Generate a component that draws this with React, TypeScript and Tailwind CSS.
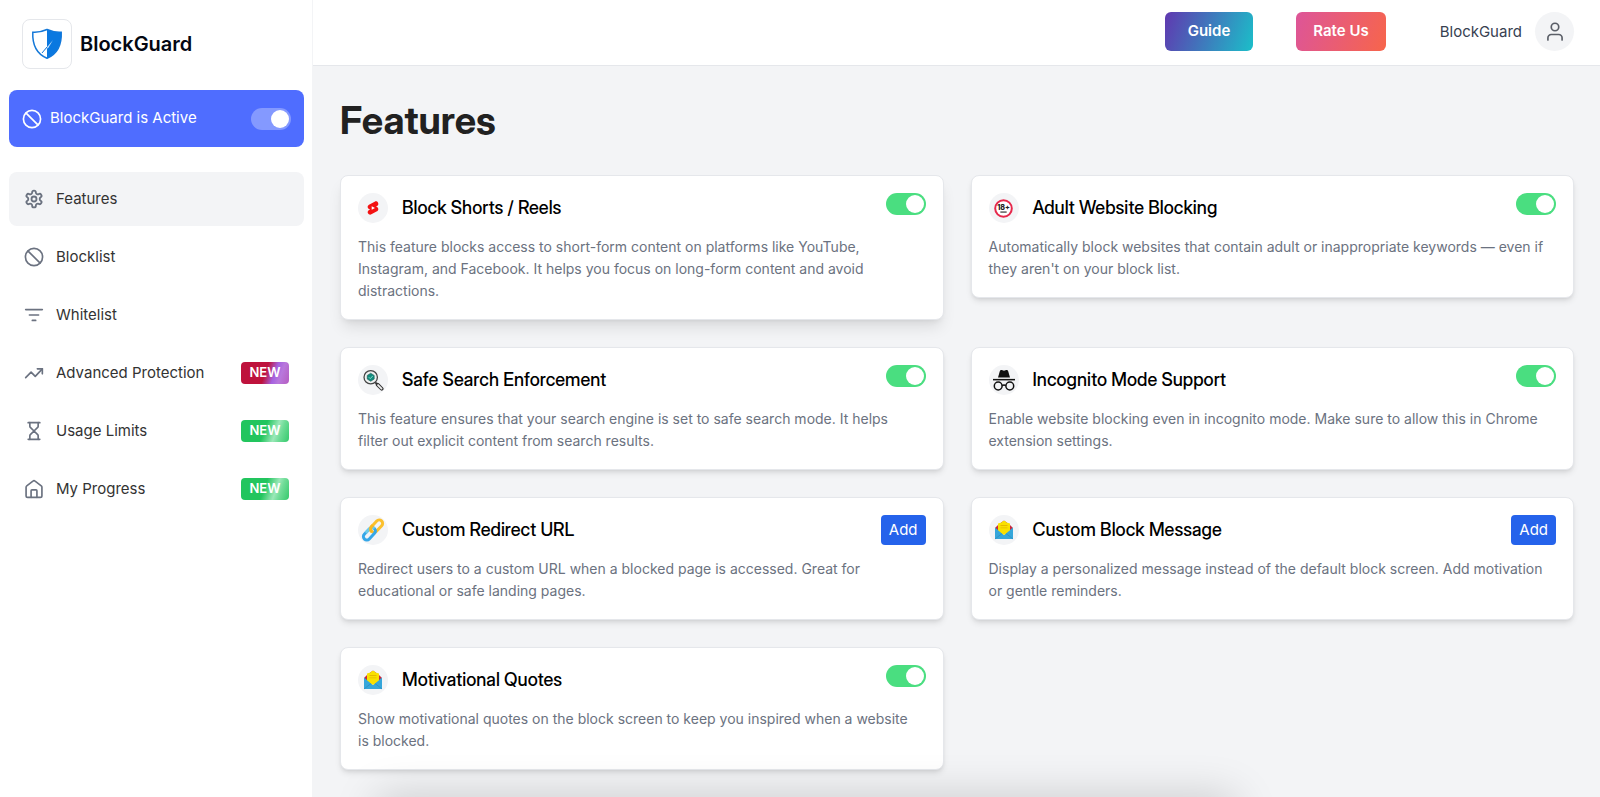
import { useState } from "react";
import type { ReactNode } from "react";

type IconProps = { className?: string; children: ReactNode; strokeWidth?: number };

function LineIcon({ className = "size-5", children, strokeWidth = 2 }: IconProps) {
  return (
    <svg viewBox="0 0 24 24" fill="none" stroke="currentColor" strokeWidth={strokeWidth} strokeLinecap="round" strokeLinejoin="round" className={className} aria-hidden="true">
      {children}
    </svg>
  );
}

const BanIcon = ({ className }: { className?: string }) => (
  <LineIcon className={className}>
    <circle cx="12" cy="12" r="10.300" />
    <path d="M4.930 4.930 19.070 19.070" />
  </LineIcon>
);

const GearIcon = () => (
  <LineIcon strokeWidth={2.2}>
    <path d="M12.22 2h-.44a2 2 0 0 0-2 2v.18a2 2 0 0 1-1 1.73l-.43.25a2 2 0 0 1-2 0l-.15-.08a2 2 0 0 0-2.73.73l-.22.38a2 2 0 0 0 .73 2.73l.15.1a2 2 0 0 1 1 1.72v.51a2 2 0 0 1-1 1.74l-.15.09a2 2 0 0 0-.73 2.73l.22.38a2 2 0 0 0 2.73.73l.15-.08a2 2 0 0 1 2 0l.43.25a2 2 0 0 1 1 1.73V20a2 2 0 0 0 2 2h.44a2 2 0 0 0 2-2v-.18a2 2 0 0 1 1-1.73l.43-.25a2 2 0 0 1 2 0l.15.08a2 2 0 0 0 2.73-.73l.22-.39a2 2 0 0 0-.73-2.73l-.15-.08a2 2 0 0 1-1-1.74v-.5a2 2 0 0 1 1-1.74l.15-.09a2 2 0 0 0 .73-2.73l-.22-.38a2 2 0 0 0-2.73-.73l-.15.08a2 2 0 0 1-2 0l-.43-.25a2 2 0 0 1-1-1.73V4a2 2 0 0 0-2-2z" />
    <circle cx="12" cy="12" r="3" />
  </LineIcon>
);

const FilterIcon = () => (
  <LineIcon>
    <path d="M2 5.500h20M6.500 12h11M10 18.500h4" />
  </LineIcon>
);

const TrendIcon = () => (
  <LineIcon>
    <path d="M2 17.500 8.500 11l5 5L22 7" />
    <path d="M16 7h6v6" />
  </LineIcon>
);

const HourglassIcon = () => (
  <LineIcon>
    <path d="M5 22h14M5 2h14" />
    <path d="M17 22v-4.17a2 2 0 0 0-.59-1.42L12 12l-4.41 4.41A2 2 0 0 0 7 17.83V22" />
    <path d="M7 2v4.17a2 2 0 0 0 .59 1.42L12 12l4.41-4.41A2 2 0 0 0 17 6.17V2" />
  </LineIcon>
);

const HomeIcon = () => (
  <LineIcon>
    <path d="M2.500 9.800a2 2 0 0 1 .8-1.600l7.400-5.700a2 2 0 0 1 2.600 0l7.400 5.700a2 2 0 0 1 .8 1.600V20a2 2 0 0 1-2 2h-15a2 2 0 0 1-2-2z" />
    <path d="M8.500 22v-8a1 1 0 0 1 1-1h5a1 1 0 0 1 1 1v8" />
  </LineIcon>
);

const UserIcon = () => (
  <LineIcon>
    <circle cx="12" cy="6" r="4.500" />
    <path d="M3.500 21.500v-2.500a4 4 0 0 1 4-4h9a4 4 0 0 1 4 4V21.500" />
  </LineIcon>
);

const ShieldLogo = () => (
  <svg viewBox="0 0 32 32" className="size-8" aria-hidden="true">
    <path d="M1.800 4.200C7 4.600 11.500 3.500 16 1.500c4.500 2 9 3.100 14.200 2.700.5 11-3 21.300-14.200 26C4.800 25.500 1.300 15.200 1.800 4.200z" fill="#fff" stroke="#1478d8" strokeWidth="1.500" />
    <path d="M16 1.500c4.500 2 9 3.100 14.200 2.700.5 11-3 21.300-14.200 26z" fill="#0a78e0" />
    <path d="M12.500 23.500 22 12l-4.500 7.500z" fill="#cfe6fb" />
    <path d="M11 25 16 19" stroke="#1478d8" strokeWidth="1" />
  </svg>
);

const ShortsIcon = () => (
  <svg viewBox="0 0 24 24" className="size-4" aria-hidden="true">
    <path fill="#f31212" d="M17.770 10.320c-.77-.32-1.200-.5-1.200-.5L18 9.060c1.840-.96 2.530-3.230 1.560-5.060s-3.240-2.530-5.070-1.560L6 6.940c-1.290.68-2.070 2.040-2 3.490.07 1.420.93 2.670 2.220 3.250.03.010 1.200.5 1.200.5L6 14.930c-1.830.97-2.530 3.240-1.560 5.070.97 1.830 3.240 2.530 5.070 1.560l8.500-4.500c1.290-.68 2.060-2.040 1.990-3.490-.07-1.420-.94-2.680-2.230-3.250z" />
    <path fill="#fff" d="m10 14.650 5-2.650-5-2.650z" />
  </svg>
);

const AdultIcon = () => (
  <svg viewBox="0 0 24 24" className="size-[19px]" aria-hidden="true">
    <circle cx="12" cy="12" r="10.500" fill="#fff" stroke="#e6284b" strokeWidth="2.500" />
    <text x="12" y="13.500" textAnchor="middle" fontSize="9" fontWeight="800" fill="#222">18+</text>
    <path d="M8 16.500h8" stroke="#333" strokeWidth="1.500" />
  </svg>
);

const SearchIcon = () => (
  <svg viewBox="0 0 24 24" className="size-[22px]" fill="none" aria-hidden="true">
    <path d="m14.500 14.500 2.500 2.500" stroke="#333" strokeWidth="2" />
    <path d="m17 17 4.500 4.500" stroke="#333" strokeWidth="4" strokeLinecap="round" />
    <path d="m17.500 17.500 3.800 3.800" stroke="#eee" strokeWidth="2" strokeLinecap="round" />
    <circle cx="9.500" cy="9" r="7.300" fill="#eef1f1" stroke="#444" strokeWidth="1.400" />
    <path d="M9.500 4.600 13.300 7v4l-3.800 2.400L5.700 11V7z" fill="#128c7e" stroke="#174f4a" strokeWidth=".6" />
    <path d="m7.500 9 1.500 1.500L11.800 7.500" stroke="#8fe0d0" strokeWidth="1" />
  </svg>
);

const IncognitoIcon = () => (
  <svg viewBox="0 0 24 24" className="size-6" aria-hidden="true">
    <path d="M6 9.500 7.800 3.200c.3-1 1-1.400 2-1.100l2.200.6 2.200-.6c1-.3 1.700.1 2 1.100L18 9.500z" fill="#111" />
    <path d="M1 10.900h22v1.500H1z" fill="#111" />
    <g fill="none" stroke="#111" strokeWidth="1.500">
      <circle cx="6.200" cy="18" r="3.900" />
      <circle cx="17.800" cy="18" r="3.900" />
      <path d="M10.100 17.600q1.900-1.400 3.800 0" />
    </g>
  </svg>
);

const LinkIcon = () => (
  <svg viewBox="0 0 24 24" className="size-6" fill="none" aria-hidden="true">
    <g transform="rotate(-47 12 12)" strokeWidth="3">
      <rect x="10" y="8.600" width="14.500" height="6.800" rx="3.400" stroke="#fbc02d" />
      <rect x="-.5" y="8.600" width="14.500" height="6.800" rx="3.400" stroke="#35a7e8" />
      <path d="M5 8.600h5.600a3.400 3.400 0 0 1 3.400 3.400" stroke="#6ccbe8" />
      <path d="M10 12.500a3.400 3.400 0 0 1 3.400-3.900h2" stroke="#f9b81f" />
    </g>
  </svg>
);

const EnvelopeIcon = () => (
  <svg viewBox="0 0 20 20" className="size-5" aria-hidden="true">
    <path d="M1 8 4 5l6-4.500L16 5l3 3v6H1z" fill="#c5283d" />
    <path d="M4 3.500 7.500 2.500 9 1h2l1.500 1.500 3.500 1V14H4z" fill="#f9e000" />
    <path d="M6.500 5.500h7M6.500 8h7" stroke="#e5b800" strokeWidth="1" />
    <path d="M1 7.500 10 15l9-7.500V19H1z" fill="#35a6da" />
    <path d="m4 10 6 5 6-5V8.500H4z" fill="#f9e000" />
    <path d="m1 19 7-5.500M19 19l-7-5.500" stroke="#2786b8" strokeWidth=".6" />
  </svg>
);

type NavItem = { label: string; icon: ReactNode; active?: boolean; badge?: "red" | "green" };

const navItems: NavItem[] = [
  { label: "Features", icon: <GearIcon />, active: true },
  { label: "Blocklist", icon: <BanIcon /> },
  { label: "Whitelist", icon: <FilterIcon /> },
  { label: "Advanced Protection", icon: <TrendIcon />, badge: "red" },
  { label: "Usage Limits", icon: <HourglassIcon />, badge: "green" },
  { label: "My Progress", icon: <HomeIcon />, badge: "green" },
];

const badgeColors = {
  red: "bg-[linear-gradient(110deg,#be123c_50%,#a562e0_68%,#b978dc_80%,#b55cc0_100%)]",
  green: "bg-[linear-gradient(110deg,#22c55e_48%,#9be8b8_70%,#6fdc97_80%,#35c96c_100%)]",
};

type Feature = { title: string; text: string; icon: ReactNode; action: "toggle" | "add"; raised?: boolean };

const features: Feature[] = [
  { title: "Block Shorts / Reels", text: "This feature blocks access to short-form content on platforms like YouTube, Instagram, and Facebook. It helps you focus on long-form content and avoid distractions.", icon: <ShortsIcon />, action: "toggle", raised: true },
  { title: "Adult Website Blocking", text: "Automatically block websites that contain adult or inappropriate keywords — even if they aren't on your block list.", icon: <AdultIcon />, action: "toggle" },
  { title: "Safe Search Enforcement", text: "This feature ensures that your search engine is set to safe search mode. It helps filter out explicit content from search results.", icon: <SearchIcon />, action: "toggle" },
  { title: "Incognito Mode Support", text: "Enable website blocking even in incognito mode. Make sure to allow this in Chrome extension settings.", icon: <IncognitoIcon />, action: "toggle" },
  { title: "Custom Redirect URL", text: "Redirect users to a custom URL when a blocked page is accessed. Great for educational or safe landing pages.", icon: <LinkIcon />, action: "add" },
  { title: "Custom Block Message", text: "Display a personalized message instead of the default block screen. Add motivation or gentle reminders.", icon: <EnvelopeIcon />, action: "add" },
  { title: "Motivational Quotes", text: "Show motivational quotes on the block screen to keep you inspired when a website is blocked.", icon: <EnvelopeIcon />, action: "toggle" },
];

function Toggle({ label, color }: { label: string; color: string }) {
  const [on, setOn] = useState(true);
  return (
    <label className={`relative flex h-[22px] w-10 shrink-0 cursor-pointer items-center rounded-full p-0.5 ${on ? `justify-end ${color}` : "justify-start bg-gray-300"}`}>
      <input type="checkbox" role="switch" aria-label={label} checked={on} onChange={() => setOn(!on)} className="sr-only" />
      <span className="size-[18px] rounded-full bg-white" />
    </label>
  );
}

function FeatureCard({ feature }: { feature: Feature }) {
  return (
    <article className={`rounded-lg border border-[#e5e7eb] bg-white p-[17px] ${feature.raised ? "shadow-lg" : "shadow-md"}`}>
      <div className="flex h-[30px] items-start justify-between">
        <div className="flex items-center gap-3.5">
          <span className="flex size-[30px] items-center justify-center rounded-full bg-[#f3f4f6]">{feature.icon}</span>
          <h2 className="font-['Inter_Display',Inter,sans-serif] text-[18px] leading-[30px] font-medium text-black">{feature.title}</h2>
        </div>
        {feature.action === "toggle" ? (
          <Toggle label={feature.title} color="bg-[#4ade80]" />
        ) : (
          <button type="button" className="h-[30px] rounded bg-[#2563eb] px-2 text-[15px] text-white">Add</button>
        )}
      </div>
      <p className="mt-[13px] pr-2.5 text-[14px] leading-[22px] text-[#6b7280]">{feature.text}</p>
    </article>
  );
}

export default function App() {
  return (
    <div className="flex h-screen overflow-hidden bg-[#f3f4f6] font-['Inter',sans-serif]">
      <aside className="flex w-[313px] shrink-0 flex-col border-r border-[#f3f4f6] bg-white pt-[19px] pr-2 pl-[9px]">
        <div className="flex items-center gap-2 pl-[13px]">
          <span className="flex size-[50px] items-center justify-center rounded-lg border border-[#e5e7eb]">
            <ShieldLogo />
          </span>
          <span className="text-[20px] leading-7 font-semibold text-[#030712]">BlockGuard</span>
        </div>
        <div className="mt-[21px] flex h-[57px] shrink-0 items-center rounded-lg bg-[#4f6dff] px-[13px] text-white">
          <BanIcon className="size-5" />
          <span className="ml-2 flex-1 text-[15px]">BlockGuard is Active</span>
          <Toggle label="BlockGuard is Active" color="bg-white/30" />
        </div>
        <nav className="mt-[25px] flex flex-col gap-1">
          {navItems.map((item) => (
            <a key={item.label} href="#" className={`flex h-[54px] items-center rounded-lg px-[15px] text-[#6b7280] ${item.active ? "bg-[#f3f4f6]" : ""}`}>
              {item.icon}
              <span className="ml-3 flex-1 text-[15px] text-[#333333]">{item.label}</span>
              {item.badge && (
                <span className={`flex h-[22px] w-12 items-center justify-center rounded text-[13px] font-semibold text-white ${badgeColors[item.badge]}`}>NEW</span>
              )}
            </a>
          ))}
        </nav>
      </aside>
      <div className="flex min-w-0 flex-1 flex-col">
        <header className="flex h-[66px] shrink-0 items-start justify-end border-b border-[#e5e7eb] bg-white pt-3 pr-[26px]">
          <button type="button" className="h-[39px] rounded-md bg-[linear-gradient(110deg,#6038b0,#1bbfc9)] px-[23px] text-[15px] font-semibold text-white">Guide</button>
          <button type="button" className="ml-[43px] h-[39px] rounded-md bg-[linear-gradient(110deg,#dd5599,#f7654b)] px-[17px] text-[15px] font-semibold text-white">Rate Us</button>
          <span className="ml-[54px] text-[15px] leading-[39px] text-[#374151]">BlockGuard</span>
          <span className="ml-[13px] flex size-[39px] items-center justify-center rounded-full bg-[#f3f4f6] text-[#5b5f68]">
            <UserIcon />
          </span>
        </header>
        <main className="relative flex-1 overflow-hidden pt-8 pr-[26px] pl-[27px]">
          <h1 className="font-['Inter_Display',Inter,sans-serif] text-[38px] leading-[44px] font-bold text-[#212121]">Features</h1>
          <div className="mt-[33px] grid grid-cols-2 items-start gap-[27px]">
            {features.map((feature) => (
              <FeatureCard key={feature.title} feature={feature} />
            ))}
          </div>
          <div className="absolute -bottom-10 left-[5%] h-10 w-2/3 shadow-[0_0_44px_rgba(0,0,0,0.18)]" />
        </main>
      </div>
    </div>
  );
}
